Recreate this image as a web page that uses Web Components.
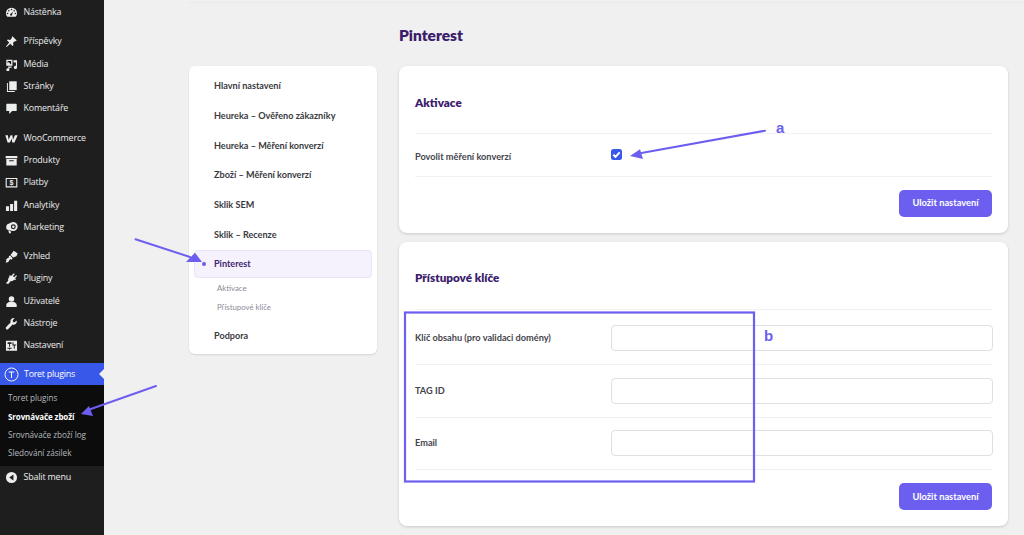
<!DOCTYPE html>
<html lang="cs"><head><meta charset="utf-8"><title>Pinterest</title>
<style>
html,body{margin:0;height:535px;overflow:hidden;background:#f0f0f0}
</style></head><body>
<app-shell>
  <wp-sidebar slot="sidebar">
    <wp-item icon="dash" style="--after:7.5px">Nástěnka</wp-item>
    <wp-item icon="pin">Příspěvky</wp-item>
    <wp-item icon="media">Média</wp-item>
    <wp-item icon="pages">Stránky</wp-item>
    <wp-item icon="comment" style="--after:7px">Komentáře</wp-item>
    <wp-item icon="woo">WooCommerce</wp-item>
    <wp-item icon="box">Produkty</wp-item>
    <wp-item icon="pay">Platby</wp-item>
    <wp-item icon="chart">Analytiky</wp-item>
    <wp-item icon="mega" style="--after:7px">Marketing</wp-item>
    <wp-item icon="brush">Vzhled</wp-item>
    <wp-item icon="plug">Pluginy</wp-item>
    <wp-item icon="user">Uživatelé</wp-item>
    <wp-item icon="wrench">Nástroje</wp-item>
    <wp-item icon="settings" style="--after:6px">Nastavení</wp-item>
    <wp-item icon="toret" current>Toret plugins</wp-item>
    <wp-submenu>
      <wp-subitem>Toret plugins</wp-subitem>
      <wp-subitem active>Srovnávače zboží</wp-subitem>
      <wp-subitem>Srovnávače zboží log</wp-subitem>
      <wp-subitem>Sledování zásilek</wp-subitem>
    </wp-submenu>
    <wp-item icon="collapse">Sbalit menu</wp-item>
  </wp-sidebar>
  <side-nav slot="nav">
    <nav-link>Hlavní nastavení</nav-link>
    <nav-link>Heureka – Ověřeno zákazníky</nav-link>
    <nav-link>Heureka – Měření konverzí</nav-link>
    <nav-link>Zboží – Měření konverzí</nav-link>
    <nav-link>Sklik SEM</nav-link>
    <nav-link>Sklik – Recenze</nav-link>
    <nav-link active>Pinterest</nav-link>
    <nav-sub>Aktivace</nav-sub>
    <nav-sub>Přístupové klíče</nav-sub>
    <nav-link style="margin-top:5px">Podpora</nav-link>
  </side-nav>
  <page-title slot="title">Pinterest</page-title>
  <settings-card slot="cards" heading="Aktivace" style="--head:68px;height:167px">
    <field-row label="Povolit měření konverzí" style="--row:42.500px;--lab:4px"><check-box></check-box></field-row>
  </settings-card>
  <settings-card slot="cards" heading="Přístupové klíče" style="--head:67.500px;height:284px">
    <field-row label="Klíč obsahu (pro validaci domény)" style="--row:55px;--pt:2px"><text-box></text-box></field-row>
    <field-row label="TAG ID" style="--row:53px"><text-box></text-box></field-row>
    <field-row label="Email" style="--row:52.500px;--pb:1px"><text-box></text-box></field-row>
  </settings-card>
  <note-overlay slot="overlay"></note-overlay>
</app-shell>
<script>
const def=(name,css,html)=>{
  customElements.define(name,class extends HTMLElement{
    connectedCallback(){ if(this.shadowRoot) return;
      const r=this.attachShadow({mode:'open'});
      r.innerHTML='<style>'+css+'</style>'+(typeof html==='function'?html(this):html);
    }
  });
};
const I={
dash:'<path fill-rule="evenodd" d="M10 2.500a8.500 8.500 0 0 0-8.500 8.500c0 2.200.9 4.200 2.200 5.500h12.600c1.300-1.300 2.200-3.300 2.200-5.500A8.500 8.500 0 0 0 10 2.500zM10 4.200a1.200 1.200 0 1 1 0 2.400 1.200 1.200 0 0 1 0-2.400zM5.800 6a1.200 1.200 0 1 1 0 2.400 1.200 1.200 0 0 1 0-2.400zM14.200 6a1.200 1.200 0 1 1 0 2.400 1.200 1.200 0 0 1 0-2.400zM4 10.200a1.200 1.200 0 1 1 0 2.400 1.200 1.200 0 0 1 0-2.400zM16 10.200a1.200 1.200 0 1 1 0 2.400 1.200 1.200 0 0 1 0-2.400zM13 8l-2.100 4.200a1.700 1.700 0 1 1-1.400-.7z"/>',
pin:'<path d="M11.500 2l6.500 6.500-1.300 1.200-1-.6-3.400 3 .7 3.600-1.300 1.300-3.500-3.500L2.500 18.500 1.500 17.500l5-5.800-3.500-3.500 1.300-1.300 3.600.7 3-3.400-.6-1z"/>',
media:'<path fill-rule="evenodd" d="M2 2.500h9.500v9.500H2zm2 2v3.500l1.700-1.700L8.500 9.500h1v-5z"/><path d="M13 3.500h5.500v11a2.400 2.400 0 1 1-1.700-2.300V7H13zM5 13v3a2.300 2.300 0 1 0 1.700 2.200V15h3.500v-2z"/>',
pages:'<path d="M6.500 2H18v13.500H6.500z"/><path d="M4.500 4.500v12.500h10.500V18.500H3V4.500z"/>',
comment:'<path d="M3 2.500h14a1 1 0 0 1 1 1v9.500a1 1 0 0 1-1 1h-6l-4.500 4.500V14H3a1 1 0 0 1-1-1V3.500a1 1 0 0 1 1-1z"/>',
woo:'<path d="M.5 5h4l1 7 3.200-7h2.600l1 7 3-7h4.200l-5 11h-3.300l-.9-5.500L7.500 16H4z"/>',
box:'<path fill-rule="evenodd" d="M1 3h18v3.500H1zM2 7.500h16V17.500H2zM6.500 9.500v1.700h7V9.500z"/>',
pay:'<path fill-rule="evenodd" d="M1 3h18v14.500H1zM2.700 4.700v11h14.600v-11z"/><text x="10" y="14.500" font-size="11" font-weight="700" text-anchor="middle" font-family="Liberation Sans,sans-serif">$</text>',
chart:'<path d="M1.500 11h4.700v7.500H1.500zM7.800 7.500h4.700v11H7.800zM14 2.500h4.700v16H14z"/>',
mega:'<path fill-rule="evenodd" d="M12.500 1.500a7 7 0 1 1 0 14c-.5 0-1 0-1.500-.2L2.800 13c-1.300-2-1.300-5.500.4-7.500L9.500 2.200a7 7 0 0 1 3-.7zM12.800 5a3.800 3.800 0 1 0 0 7.600 3.800 3.800 0 0 0 0-7.600z"/><circle cx="12.800" cy="8.800" r="2"/><path d="M5 14.300l3.500 1 1 3.500H6.300z"/>',
brush:'<path d="M13.500 1L19.500 5.500 17.500 9.500 12.500 11.500 8.500 7.500z"/><path d="M7.800 8.500l4 4-2 2.500-1.800-1-3 4.500-4 1 1.500-4.500-1.500-.5 5.500-3.500-1-1.200z"/>',
plug:'<path d="M13.500 2l1.500 1.200-2.800 3.300 2 1.700 2.800-3.300L18.500 6l-3 3.500L17 11l-1.500 1.500-1-.8c-1.800 2-4 3-6 2.500L5.500 18H2v-1.500l3-3.200c-.8-2 .1-4.300 2-6l-.8-1L7.500 5l1.800 1.300z"/>',
user:'<circle cx="10" cy="6" r="4.200"/><path d="M2 18.500v-3.500c0-2.500 3-4 5-4.800 1.800 1 4.200 1 6 0 2 .8 5 2.300 5 4.800v3.500z"/>',
wrench:'<path d="M18 5.300a5 5 0 0 1-6.300 6.300L5 18.400a2.100 2.100 0 0 1-3.200-3.200l6.700-6.900a5 5 0 0 1 6.300-6.300l-3 3 .9 2.900 2.100.2z"/>',
settings:'<path fill-rule="evenodd" d="M1.500 2.500h17v15.500h-17zM4 5v2.500h2.300V12h1.500V7.500H10V5zM11.500 5v5h2v5H15v-5h2.200V8.500H13V5zM3.700 13.500V15h2.500v1.200h1.500V15h2.500v-1.500z"/>',
toret:'<circle cx="10" cy="10" r="8.700" fill="none" stroke="currentColor" stroke-width="1.200"/><path d="M6.300 6h7.400v1.400h-3V14.500H9.300V7.400h-3z"/>',
collapse:'<path fill-rule="evenodd" d="M10 1.500a8.500 8.500 0 1 1 0 17 8.500 8.500 0 0 1 0-17zM13 5.500L6.500 10l6.500 4.500z"/>'
};
const SANS='"Open Sans","Noto Sans",sans-serif';
const NUN='"Lato","Open Sans",sans-serif';

def('app-shell',`
:host{display:grid;grid-template-columns:104px 1fr;width:1024px;height:535px;position:relative;overflow:hidden;background:#f0f0f0}
.side{grid-column:1;min-width:0}
.main{grid-column:2;display:grid;grid-template-columns:188px 609px;column-gap:22px;padding:0 0 0 85px;align-content:start}
.rule{grid-column:1/-1;height:1.500px;background:#e9e9e9;margin:1.500px 0 24px -1px;width:837px}
.title{grid-column:2;height:39px}
.nav{grid-column:1;grid-row:3;align-self:start}
.cards{grid-column:2;grid-row:3;display:flex;flex-direction:column;gap:9px}
`,`<div class="side"><slot name="sidebar"></slot></div>
<div class="main"><div class="rule"></div><div class="title"><slot name="title"></slot></div>
<div class="nav"><slot name="nav"></slot></div>
<div class="cards"><slot name="cards"></slot></div></div>
<slot name="overlay"></slot>`);

def('wp-sidebar',`
:host{display:block;height:535px;background:#1e1e1e;padding-top:1px;box-sizing:border-box;font:400 8.900px/1 ${SANS};color:#e8eaeb}
`,`<slot></slot>`);

def('wp-item',`
:host{display:flex;align-items:center;height:22.300px;margin-bottom:var(--after,0);padding-left:5px;gap:5.500px;position:relative;color:#eceded;letter-spacing:-.16px}
svg{width:13px;height:13px;fill:currentColor;flex:none}
:host([current]){background:#3858e9;color:#fff;margin-bottom:0;letter-spacing:-.25px}
:host([current]) svg{width:15px;height:15px;margin-left:-1px;margin-right:-.500px}
:host([current]) .tip{position:absolute;right:0;top:6px;border:5px solid transparent;border-right-color:#f0f0f0;border-left:0}
`,el=>`<svg viewBox="0 0 20 20">${I[el.getAttribute('icon')]}</svg><slot></slot>${el.hasAttribute('current')?'<i class="tip"></i>':''}`);

def('wp-submenu',`
:host{display:block;background:#0c0c0c;padding:4px 0 4.500px;height:81px;box-sizing:border-box}
`,`<slot></slot>`);
def('wp-subitem',`
:host{display:flex;align-items:center;height:18.200px;padding-left:8px;font-size:8.200px;color:#b4b9be;letter-spacing:-.05px}
:host([active]){color:#fff;font-weight:700;font-size:8px;letter-spacing:-.12px}
`,`<slot></slot>`);

def('side-nav',`
:host{display:block;height:288px;box-sizing:border-box;background:#fff;border-radius:6px;box-shadow:0 1px 2px rgba(0,0,0,.12);padding:6px 5px 0}
`,`<slot></slot>`);
def('nav-link',`
:host{display:flex;align-items:center;height:27.500px;margin-bottom:2.200px;box-sizing:border-box;padding-left:19px;font:700 9.100px/1 ${NUN};color:#3a3a40;border:1px solid transparent;border-radius:4px;position:relative}
:host([active]){background:#f5f2fd;border-color:#e9e4f8;color:#43246e}
:host([active])::before{content:"";position:absolute;left:7px;top:11px;width:4px;height:4px;border-radius:50%;background:#6c5ce7}
`,`<slot></slot>`);
def('nav-sub',`
:host{display:flex;align-items:center;height:18.500px;padding-left:23px;font:400 7.800px/1 ${NUN};color:#8a8a96}
`,`<slot></slot>`);

def('page-title',`
:host{display:block;font:800 15.500px/17px ${NUN};color:#3b1d6b}
`,`<slot></slot>`);
def('settings-card',`
:host{display:flex;flex-direction:column;box-sizing:border-box;background:#fff;border-radius:8px;box-shadow:0 1px 3px rgba(0,0,0,.16);padding:0 16px 0}
h2{margin:0;height:var(--head);display:flex;align-items:center;box-sizing:border-box;padding-top:6px;font:800 11.700px/1 ${NUN};color:#3b1d6b;border-bottom:1.500px solid #f1f1f3;flex:none}
.foot{display:flex;justify-content:flex-end;padding-top:13px}
button{width:93px;height:27px;border:0;border-radius:5px;background:#6c5ff0;color:#fff;font:700 9.300px/1 ${NUN};padding:0}
`,el=>`<h2>${el.getAttribute('heading')}</h2><slot></slot><div class="foot"><button>Uložit nastavení</button></div>`);
def('field-row',`
:host{display:grid;grid-template-columns:196px 1fr;align-items:center;height:var(--row,52.800px);padding-top:var(--pt,0);padding-bottom:var(--pb,0);border-bottom:1.500px solid #f1f1f3;box-sizing:border-box;font:700 9.200px/1 ${NUN};color:#44444c}
span{padding-top:var(--lab,0)}
`,el=>`<span>${el.getAttribute('label')}</span><div style="display:flex"><slot></slot></div>`);
def('text-box',`
:host{display:block;width:calc(100% + 1px);height:26px;box-sizing:border-box;background:#fff;border:1px solid #dfdfe4;border-radius:4px;flex:none}
`,``);
def('check-box',`
:host{display:flex;align-items:center;justify-content:center;width:11px;height:11px;border-radius:2.500px;background:#3858e9}
svg{width:9px;height:9px;fill:none;stroke:#fff;stroke-width:2.300}
`,`<svg viewBox="0 0 10 10"><path d="M1.500 5.200l2.400 2.400 4.600-5"/></svg>`);
def('note-overlay',`
:host{position:absolute;inset:0;pointer-events:none;display:block}
svg{position:absolute;inset:0;width:1024px;height:535px}
span{position:absolute;color:#6c5ff0;font:700 15px/1 "Liberation Sans",sans-serif}
`,`<svg viewBox="0 0 1024 535">
<g stroke="#6c5ff0" stroke-width="2" fill="none" stroke-linecap="round"><path d="M765 130.700L640 153.300"/><path d="M135.500 239.200L190 257"/><path d="M156 386L88 410"/></g>
<g fill="#6c5ff0"><path d="M630 156L640 149.300L643 159z"/><path d="M202 262L195 252.700L186 262z"/><path d="M81 414L89 406L93 416z"/></g>
<rect x="405" y="312.500" width="349" height="169" fill="none" stroke="#6c5ff0" stroke-width="2.200"/>
</svg><span style="left:776px;top:120px">a</span><span style="left:764px;top:328px">b</span>`);
</script>
</body></html>
